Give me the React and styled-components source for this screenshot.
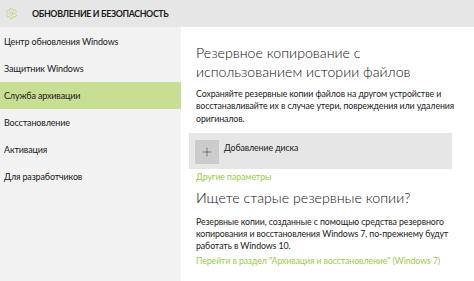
import React from 'react'
import styled, { createGlobalStyle } from 'styled-components'
import { Settings, Plus } from 'lucide-react'

const GlobalStyle = createGlobalStyle`
    html, body {
        margin: 0;
        padding: 0;
        background: #fff;
    }
    body {
        font-family: Lato, "Open Sans", "Noto Sans", sans-serif;
        color: #1a1a1a;
    }
`

const Window = styled.div`
    width: 474px;
    height: 281px;
    display: flex;
    flex-direction: column;
    overflow: hidden;
`

const TitleBar = styled.div`
    height: 27px;
    flex-shrink: 0;
    background: #e6e6e6;
    display: flex;
    align-items: center;
    gap: 14px;
    padding-left: 5px;
`

const Title = styled.div`
    font-size: 8.8px;
    font-weight: 700;
    letter-spacing: -0.35px;
    color: #1a1a1a;
`

const Body = styled.div`
    flex: 1;
    display: grid;
    grid-template-columns: 181px 1fr;
`

const Sidebar = styled.nav`
    background: #f2f2f2;
    padding-top: 1px;
`

const NavItem = styled.div`
    height: 27px;
    display: flex;
    align-items: center;
    padding-left: 4px;
    font-size: 9px;
    letter-spacing: -0.15px;
    color: #1a1a1a;
    background: ${p => (p.active ? '#c8de93' : 'transparent')};
`

const Main = styled.main`
    padding: 16px 0 0 15px;
`

const Heading = styled.h2`
    margin: ${p => p.mt || 0}px 0 0;
    font-size: 14.2px;
    font-weight: 300;
    line-height: 19px;
    color: #111;
    white-space: nowrap;
`

const Text = styled.p`
    margin: ${p => p.mt || 0}px 0 0;
    font-size: 8.8px;
    letter-spacing: -0.1px;
    line-height: 12.3px;
    color: #1a1a1a;
    white-space: nowrap;
`

const AddDisk = styled.div`
    margin: 8px 0 0 -7px;
    width: 263px;
    height: 36px;
    background: #e6e6e6;
    display: flex;
    align-items: flex-start;
    gap: 5px;
    padding: 7px 6px 0;
    box-sizing: border-box;
`

const PlusTile = styled.div`
    width: 24px;
    height: 24px;
    background: #cccccc;
    display: flex;
    align-items: center;
    justify-content: center;
    color: #555;
`

const TileLabel = styled.span`
    font-size: 8.8px;
    letter-spacing: -0.1px;
    line-height: 12px;
    margin-top: 2px;
`

const Link = styled.a`
    display: block;
    margin-top: ${p => p.mt || 0}px;
    font-size: 8.8px;
    letter-spacing: -0.1px;
    line-height: 12px;
    color: #9ccb4a;
    text-decoration: none;
    white-space: nowrap;
`

const App = () => {
    const items = [
        'Центр обновления Windows',
        'Защитник Windows',
        'Служба архивации',
        'Восстановление',
        'Активация',
        'Для разработчиков',
    ]

    return (
        <Window>
            <GlobalStyle />
            <TitleBar>
                <Settings size={13} color="#b3d66a" strokeWidth={1.5} />
                <Title>ОБНОВЛЕНИЕ И БЕЗОПАСНОСТЬ</Title>
            </TitleBar>
            <Body>
                <Sidebar>
                    {items.map((item, i) => (
                        <NavItem key={item} active={i === 2}>{item}</NavItem>
                    ))}
                </Sidebar>
                <Main>
                    <Heading>Резервное копирование с<br />использованием истории файлов</Heading>
                    <Text mt={7}>
                        Сохраняйте резервные копии файлов на другом устройстве и<br />
                        восстанавливайте их в случае утери, повреждения или удаления<br />
                        оригиналов.
                    </Text>
                    <AddDisk>
                        <PlusTile><Plus size={14} strokeWidth={1.2} /></PlusTile>
                        <TileLabel>Добавление диска</TileLabel>
                    </AddDisk>
                    <Link mt={2}>Другие параметры</Link>
                    <Heading mt={5}>Ищете старые резервные копии?</Heading>
                    <Text mt={9}>
                        Резервные копии, созданные с помощью средства резервного<br />
                        копирования и восстановления Windows 7, по-прежнему будут<br />
                        работать в Windows 10.
                    </Text>
                    <Link mt={2}>Перейти в раздел "Архивация и восстановление" (Windows 7)</Link>
                </Main>
            </Body>
        </Window>
    )
}

export default App
